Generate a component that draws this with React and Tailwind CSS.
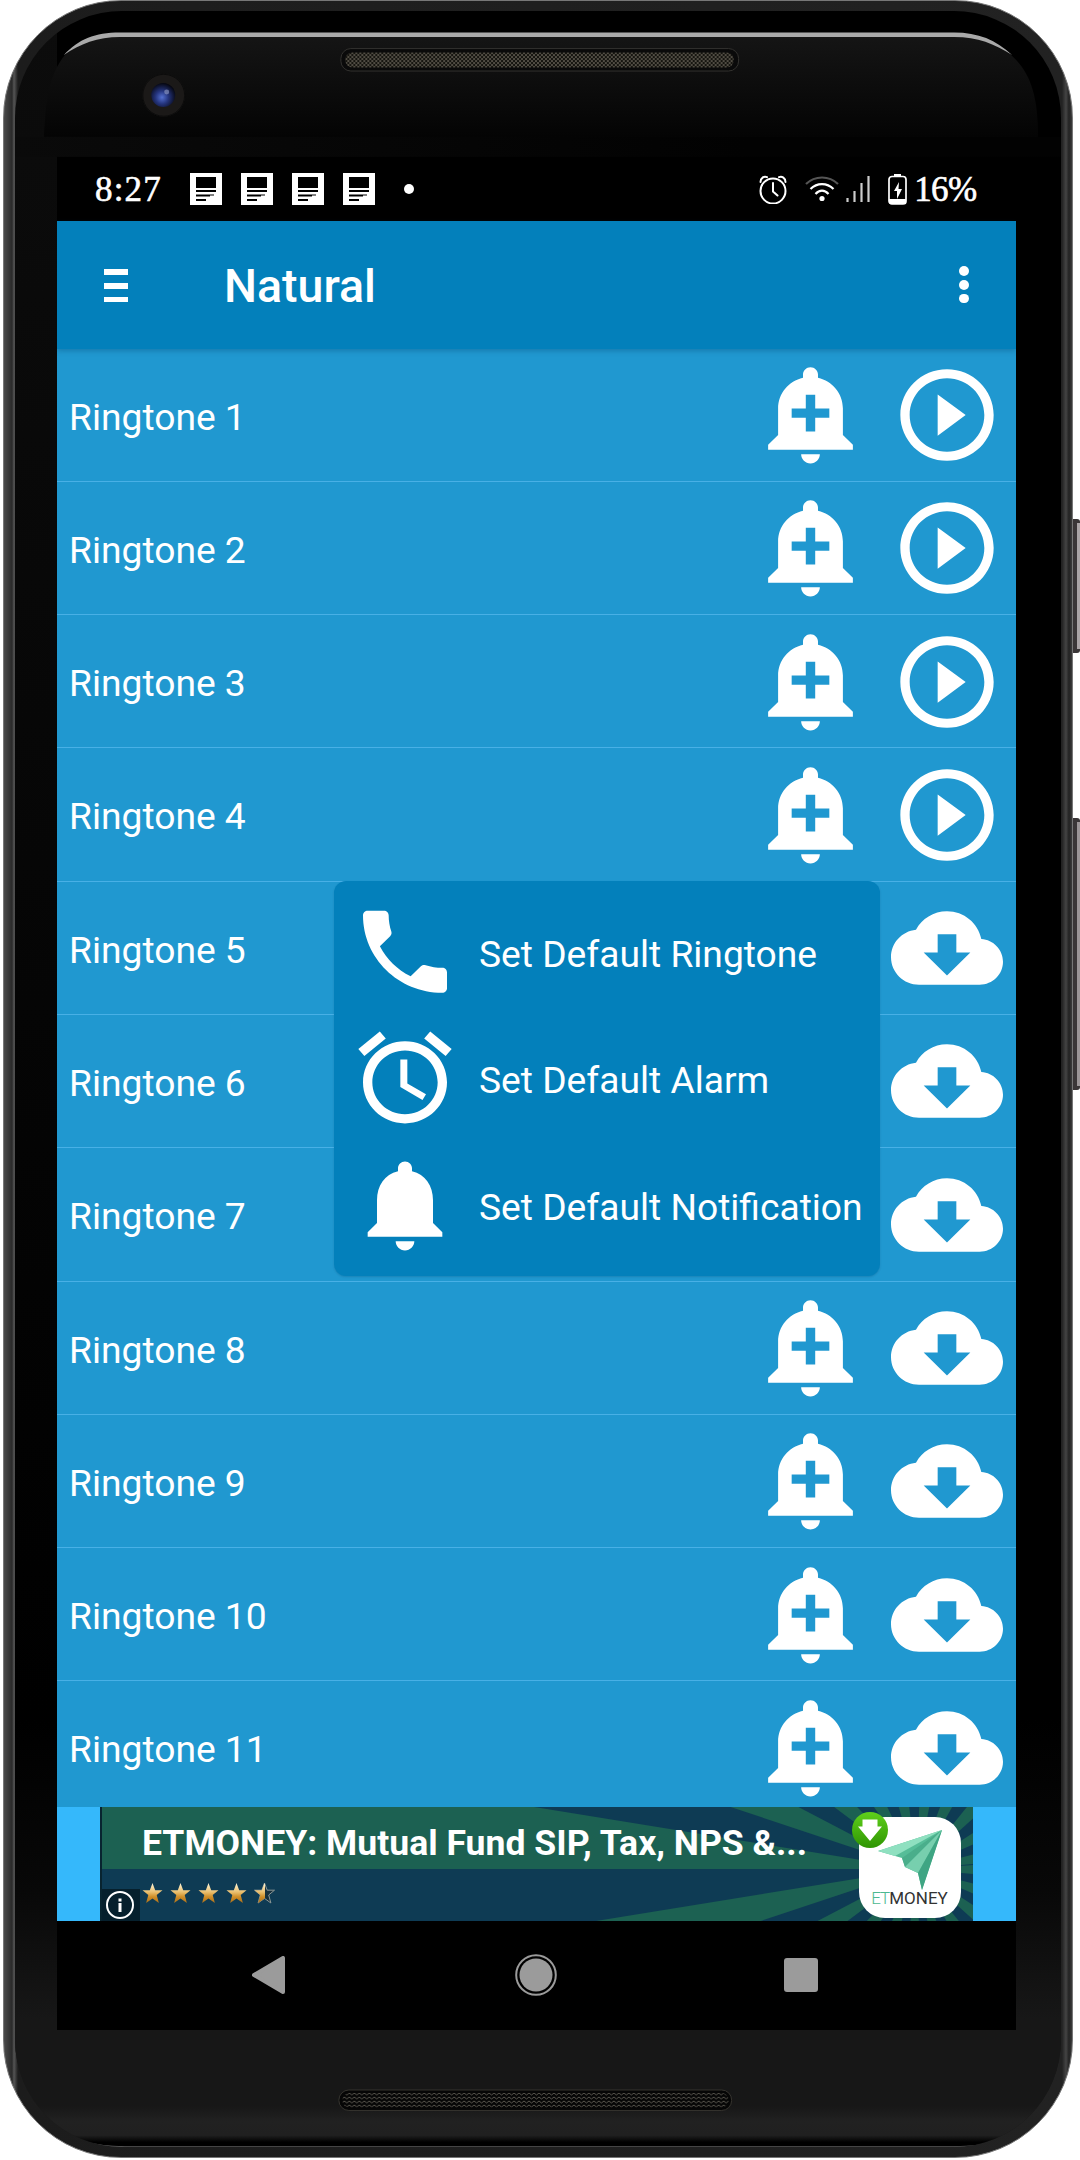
const RINGTONES = Array.from({ length: 11 }, (_, i) => ({
  id: i + 1,
  name: `Ringtone ${i + 1}`,
  downloaded: i < 4,
}));

const ICONS = {
  addAlert:
    'M10.01 21.01c0 1.1.89 1.99 1.99 1.99s1.99-.89 1.99-1.99h-3.98zm8.87-4.19V11c0-3.25-2.25-5.97-5.29-6.69v-.72C13.59 2.71 12.88 2 12 2s-1.59.71-1.59 1.59v.72C7.37 5.03 5.12 7.75 5.12 11v5.82L3 18.94V20h18v-1.06l-2.12-2.12zM16 13.01h-3v3h-2v-3H8V11h3V8h2v3h3v2.01z',
  play: 'M10 16.5l6-4.5-6-4.5v9zM12 2C6.48 2 2 6.48 2 12s4.48 10 10 10 10-4.48 10-10S17.52 2 12 2zm0 18c-4.41 0-8-3.59-8-8s3.59-8 8-8 8 3.59 8 8-3.59 8-8 8z',
  download:
    'M19.35 10.04C18.67 6.59 15.64 4 12 4 9.11 4 6.6 5.64 5.35 8.04 2.34 8.36 0 10.91 0 14c0 3.31 2.69 6 6 6h13c2.76 0 5-2.24 5-5 0-2.64-2.05-4.78-4.65-4.96zM17 13l-5 5-5-5h3V9h4v4h3z',
  phone:
    'M6.62 10.79c1.44 2.83 3.76 5.14 6.59 6.59l2.2-2.2c.27-.27.67-.36 1.02-.24 1.12.37 2.33.57 3.57.57.55 0 1 .45 1 1V20c0 .55-.45 1-1 1-9.39 0-17-7.61-17-17 0-.55.45-1 1-1h3.5c.55 0 1 .45 1 1 0 1.25.2 2.45.57 3.57.11.35.03.74-.25 1.02l-2.2 2.2z',
  alarm:
    'M22 5.72l-4.6-3.86-1.29 1.53 4.6 3.86L22 5.72zM7.88 3.39L6.6 1.86 2 5.71l1.29 1.53 4.59-3.85zM12.5 8H11v6l4.75 2.85.75-1.23-4-2.37V8zM12 4c-4.97 0-9 4.03-9 9s4.02 9 9 9c4.97 0 9-4.03 9-9s-4.03-9-9-9zm0 16c-3.87 0-7-3.13-7-7s3.13-7 7-7 7 3.13 7 7-3.13 7-7 7z',
  bell: 'M12 22c1.1 0 2-.9 2-2h-4c0 1.1.89 2 2 2zm6-6v-5c0-3.07-1.64-5.64-4.5-6.32V4c0-.83-.67-1.5-1.5-1.5s-1.5.67-1.5 1.5v.68C7.63 5.36 6 7.92 6 11v5l-2 2v1h16v-1l-2-2z',
};

const MENU = [
  { icon: 'phone', label: 'Set Default Ringtone' },
  { icon: 'alarm', label: 'Set Default Alarm' },
  { icon: 'bell', label: 'Set Default Notification' },
];

function Icon({ name, className }) {
  return (
    <svg viewBox="0 0 24 24" preserveAspectRatio="none" fill="currentColor" className={className}>
      <path d={ICONS[name]} />
    </svg>
  );
}

/* Phone hardware */

function TopBezel() {
  return (
    <svg viewBox="15 11 1048 146" className="block h-[146px] w-full shrink-0">
      <defs>
        <linearGradient id="glass" x1="0" y1="0" x2="0" y2="1">
          <stop offset="0" stopColor="#151515" />
          <stop offset="1" stopColor="#040404" />
        </linearGradient>
        <linearGradient id="lowerGlass">
          <stop offset="0" stopColor="#0a0a0a" />
          <stop offset="0.700" stopColor="#020202" />
        </linearGradient>
        <pattern id="mesh" width="4" height="4" patternUnits="userSpaceOnUse">
          <rect width="4" height="4" fill="#15140f" />
          <circle cx="1" cy="1" r="0.95" fill="#6a655a" />
          <circle cx="3" cy="3" r="0.95" fill="#6a655a" />
        </pattern>
        <radialGradient id="lens" cx="0.45" cy="0.6" r="0.6">
          <stop offset="0" stopColor="#5470d0" />
          <stop offset="0.45" stopColor="#25357e" />
          <stop offset="1" stopColor="#05060f" />
        </radialGradient>
      </defs>
      <path d="M44 137C46 95 50 74 65 55 78 42 92 35 118 35H955C982 35 998 42 1013 55 1032 72 1040 95 1040 137Z" fill="url(#glass)" />
      <rect x="15" y="137" width="1048" height="20" fill="url(#lowerGlass)" />
      <path d="M64 55C79 39 95 32.500 120 32.500H956C980 32.500 998 40 1014 55 996 44 980 37 956 37H120C98 37 80 44 64 55Z" fill="#a9a9a9" />
      <circle cx="164" cy="95.300" r="21.500" fill="#1b1918" />
      <circle cx="164" cy="95.300" r="21" fill="none" stroke="#0c0c0c" />
      <circle cx="163.500" cy="95" r="12" fill="url(#lens)" />
      <circle cx="167" cy="92" r="2.500" fill="#8490bd" opacity="0.700" />
      <rect x="341.500" y="48.500" width="398.500" height="22.500" rx="10" fill="#0a0a0a" stroke="#33322f" />
      <rect x="346" y="52.500" width="389" height="15" rx="7" fill="url(#mesh)" />
    </svg>
  );
}

function BottomBezel() {
  return (
    <svg viewBox="15 2030 1048 117" className="block h-[117px] w-full shrink-0">
      <defs>
        <linearGradient id="chin" x1="0" y1="0" x2="0" y2="1">
          <stop offset="0" stopColor="#171717" />
          <stop offset="0.650" stopColor="#171717" />
          <stop offset="0.780" stopColor="#212121" />
          <stop offset="0.900" stopColor="#202020" />
          <stop offset="0.960" stopColor="#000" />
        </linearGradient>
        <pattern id="meshLow" width="5" height="4" patternUnits="userSpaceOnUse">
          <path d="M0 1L2.500 3L5 1" fill="none" stroke="#5a574f" strokeWidth="1" />
        </pattern>
      </defs>
      <rect x="15" y="2030" width="1048" height="117" fill="url(#chin)" />
      <path d="M42 2119C66 2139 92 2147 125 2147H956C992 2147 1010 2139 1034 2119" fill="none" stroke="#5c5c5c" strokeWidth="1.200" />
      <rect x="339.500" y="2090" width="393.500" height="20.500" rx="10" fill="#060606" stroke="#36342f" />
      <rect x="343" y="2093" width="387" height="14.500" rx="7" fill="url(#meshLow)" />
    </svg>
  );
}

/* Status bar */

function NewsIcon() {
  return (
    <svg viewBox="0 0 32 32" className="h-8 w-8">
      <rect width="32" height="32" fill="#fff" />
      <path d="M6 4h20v11H6zM6 17h20v2H6zM6 21.500h14v2H6zM6 26h10v2H6zM20 21.500h4v1h-4z" fill="#000" />
    </svg>
  );
}

function StatusBar() {
  return (
    <div className="flex h-[64px] shrink-0 items-center bg-black pl-[38px] pr-[39px] font-['Liberation_Serif',serif] text-[35px] leading-none text-white [-webkit-text-stroke:0.6px_#fff]">
      <span className="w-[94.500px] tracking-[1.200px]">8:27</span>
      <div className="flex gap-[19.200px]">
        {[0, 1, 2, 3].map((n) => (
          <NewsIcon key={n} />
        ))}
      </div>
      <span className="ml-[29px] h-[10px] w-[10px] rounded-full bg-white" />
      <svg viewBox="0 0 28 29" className="ml-auto h-[29px] w-[28px]" fill="none" stroke="#fff" strokeWidth="2">
        <circle cx="14" cy="16" r="12.500" />
        <path d="M14 8v8.500l4.500 4M1.500 7C1.500 3 5 .8 8 2.200M26.500 7C26.500 3 23 .8 20 2.200" strokeLinecap="round" />
      </svg>
      <svg viewBox="0 0 34 28" className="ml-[18px] h-[28px] w-[34px]" fill="none" stroke="#fff" strokeWidth="2.200">
        <path d="M1 9C10 .3 24 .3 33 9" stroke="#555" />
        <path d="M5.500 14C12 7.500 22 7.500 28.500 14M10.500 19C14.500 14.500 19.500 14.500 23.500 19" />
        <circle cx="17" cy="23.500" r="2.600" fill="#fff" stroke="none" />
      </svg>
      <svg viewBox="0 0 24 28" className="ml-[7px] h-[28px] w-[24px]" stroke="#ccc" strokeWidth="2.200">
        <path d="M1.500 23v4M8.500 16v11M15.500 8v19M22.500 1v26" />
      </svg>
      <svg viewBox="0 0 19 31" className="ml-[18px] h-[31px] w-[19px]">
        <path d="M6 0h7v3H6z" fill="#fff" />
        <rect x="1" y="2.500" width="17" height="27.500" rx="3" fill="none" stroke="#fff" strokeWidth="1.700" />
        <path d="M1 25h17v3q0 2-3 2H4q-3 0-3-2z" fill="#fff" />
        <path d="M11 8L6 17h3v8l5-10h-3.500z" fill="#fff" />
      </svg>
      <span className="ml-[7px] tracking-[-0.600px]">16%</span>
    </div>
  );
}

function AppBar() {
  return (
    <header className="z-10 flex h-[127.500px] shrink-0 items-center bg-[#0380bb] pl-[46.500px] pr-[47px] pt-[2px] shadow-[0_2px_5px_rgba(0,60,100,0.300)]">
      <div className="flex w-[24px] flex-col gap-[8px]">
        <span className="h-[5.600px] bg-white" />
        <span className="h-[5.600px] bg-white" />
        <span className="h-[5.600px] bg-white" />
      </div>
      <h1 className="ml-[96.500px] text-[46.500px] font-medium leading-none text-white">Natural</h1>
      <div className="-mt-[2px] ml-auto flex flex-col gap-[4.200px]">
        <span className="h-[9.500px] w-[9.500px] rounded-full bg-white" />
        <span className="h-[9.500px] w-[9.500px] rounded-full bg-white" />
        <span className="h-[9.500px] w-[9.500px] rounded-full bg-white" />
      </div>
    </header>
  );
}

function RingtoneRow({ tone }) {
  return (
    <li className="flex h-[133.300px] shrink-0 items-start border-b border-[#48b0e6] pl-[12px] pr-[13px] pt-[10.500px] text-white">
      <span className="mt-[36.500px] flex-1 text-[37.200px] leading-[42px]">{tone.name}</span>
      <Icon name="addAlert" className="-mt-px h-[110px] w-[113px]" />
      <Icon name={tone.downloaded ? 'play' : 'download'} className="ml-[23.500px] mt-px h-[110px] w-[112px]" />
    </li>
  );
}

function DefaultMenu() {
  return (
    <div className="absolute left-[276.500px] top-[533px] flex h-[395px] w-[546px] flex-col rounded-[12px] bg-[#0380bb] pl-[15px] pt-[15.500px] text-white shadow-[0_1px_2px_rgba(0,50,90,0.200)]">
      {MENU.map((item) => (
        <div key={item.icon} className="flex h-[127.300px] items-start">
          <Icon name={item.icon} className="h-[109.500px] w-[112px] shrink-0" />
          <span className="ml-[18.500px] mt-[36px] whitespace-nowrap text-[37.200px] leading-[42px]">{item.label}</span>
        </div>
      ))}
    </div>
  );
}

/* Ad banner */

function rayPoints(n) {
  const at = (deg) => {
    const a = (deg * Math.PI) / 180;
    return `${(815 - 1200 * Math.cos(a)).toFixed(1)},${(62 - 1200 * Math.sin(a)).toFixed(1)}`;
  };
  return `815,62 ${at(n * 18.4)} ${at(n * 18.4 + 9.2)}`;
}

function Star({ half }) {
  const d = 'M10.500 0l2.700 7.200h7.300l-5.800 4.800 2.200 8-6.400-4.600L4.100 20l2.200-8L.5 7.200h7.300z';
  return (
    <svg viewBox="0 0 21 21" className="h-[21px] w-[21px]">
      <defs>
        <linearGradient id="gold" x1="0" y1="0" x2="0" y2="1">
          <stop offset="0" stopColor="#fff6da" />
          <stop offset="0.450" stopColor="#eac070" />
          <stop offset="0.700" stopColor="#cf8d26" />
          <stop offset="1" stopColor="#a9701d" />
        </linearGradient>
        <clipPath id="leftHalf">
          <rect width="11" height="21" />
        </clipPath>
      </defs>
      {half && <path d={d} fill="#16303d" stroke="#8b9795" strokeWidth="1" />}
      <path d={d} fill="url(#gold)" clipPath={half ? 'url(#leftHalf)' : undefined} />
    </svg>
  );
}

function EtMoneyLogo() {
  return (
    <div className="relative mt-[10px] flex h-[101px] w-[102px] flex-col items-center rounded-[26px] bg-white">
      <svg viewBox="0 0 102 76" className="h-[76px] w-[102px]">
        <path d="M19 34L83 13 63 73 59 56 46 50 43 41z" fill="#56bd98" />
        <path d="M19 34L83 13 36 39z" fill="#8fe0c0" />
        <path d="M43 41L83 13 46 50z" fill="#4aae8b" />
        <path d="M46 50L83 13 59 56z" fill="#77cfae" />
        <path d="M59 56L83 13 63 73z" fill="#3fa583" />
      </svg>
      <span className="-mt-[3px] text-[17px] leading-[17px] text-[#333]">
        <span className="font-light tracking-[-1px] text-[#4cb890]">ET</span>MONEY
      </span>
      <svg viewBox="0 0 36 36" className="absolute left-[-7px] top-[-5px] h-[36px] w-[36px]">
        <defs>
          <linearGradient id="badge" x1="0" y1="0" x2="0" y2="1">
            <stop offset="0" stopColor="#5fd01b" />
            <stop offset="1" stopColor="#2f9503" />
          </linearGradient>
        </defs>
        <circle cx="18" cy="18" r="18" fill="url(#badge)" />
        <path d="M10.500 7.500h15v7H30L18 29 6 14.500h4.500z" fill="#fff" />
      </svg>
    </div>
  );
}

function AdBanner() {
  return (
    <div className="z-10 flex h-[113.500px] shrink-0 justify-center bg-[#35b8fb]">
      <div className="relative flex w-[873.500px] items-start overflow-hidden border-l-2 border-[#082430] bg-[#0e3b54]">
        <svg viewBox="0 0 872 114" className="absolute inset-0 h-[114px] w-[872px]">
          {Array.from({ length: 20 }, (_, n) => (
            <polygon key={n} points={rayPoints(n - 10)} fill="#1c6152" />
          ))}
        </svg>
        <div className="relative flex-1 pl-[40.500px] pt-[15px]">
          <p className="whitespace-nowrap text-[35.600px] font-bold leading-[42px] text-white">
            ETMONEY: Mutual Fund SIP, Tax, NPS &amp;...
          </p>
          <div className="mt-[19px] flex gap-[7px]">
            {[1, 2, 3, 4].map((n) => (
              <Star key={n} />
            ))}
            <Star half />
          </div>
        </div>
        <div className="mr-[12.500px]">
          <EtMoneyLogo />
        </div>
        <div className="absolute bottom-0 left-[-2px] flex h-[32px] w-[40px] items-center justify-center bg-[#06202d]">
          <svg viewBox="0 0 28 28" className="h-[28px] w-[28px]" fill="none" stroke="#fff" strokeWidth="2">
            <circle cx="14" cy="14" r="13" />
            <path d="M14 12v9M14 7.500v3" strokeWidth="3" />
          </svg>
        </div>
      </div>
    </div>
  );
}

function NavBar() {
  return (
    <nav className="flex h-[109px] shrink-0 items-center bg-black pl-[195px] text-[#9b9b9b]">
      <svg viewBox="0 0 33 38" className="h-[38px] w-[33px]" fill="currentColor" stroke="currentColor" strokeWidth="4" strokeLinejoin="round">
        <path d="M2 19L31 2v34z" />
      </svg>
      <svg viewBox="0 0 42 42" className="ml-[230px] h-[42px] w-[42px]">
        <circle cx="21" cy="21" r="19.800" fill="none" stroke="currentColor" strokeWidth="2" />
        <circle cx="21" cy="21" r="16.500" fill="currentColor" />
      </svg>
      <span className="ml-[226.500px] h-[34px] w-[34.500px] rounded-[3px] bg-[#9b9b9b]" />
    </nav>
  );
}

export default function App() {
  return (
    <div className="flex h-[2160px] w-[1080px] overflow-hidden bg-white pl-[3px] font-[Roboto,sans-serif]">
      <div className="h-[2158px] w-[1070px] shrink-0 rounded-[118px] border border-[#777] bg-[linear-gradient(90deg,#4a4a4a,#2a2a2a_8px,#555_10px,#1c1c1c_14px,#222_1058px,#444_1062px,#222_1065px,#3c3c3c)] px-[11px] pb-[10px] pt-[10px]">
        <div className="flex h-full flex-col overflow-hidden rounded-[107px] bg-[linear-gradient(#0c0c0c,#000),linear-gradient(#000,#000_80%,#080808_88%,#171717_94%)] bg-[length:42px_1700px,100%_100%] bg-no-repeat">
          <TopBezel />
          <div className="relative ml-[42px] flex h-[1873px] w-[958.500px] shrink-0 flex-col overflow-hidden bg-[#2098d0]">
            <StatusBar />
            <AppBar />
            <ul className="flex h-[1458.500px] shrink-0 flex-col overflow-hidden">
              {RINGTONES.map((tone) => (
                <RingtoneRow key={tone.id} tone={tone} />
              ))}
            </ul>
            <AdBanner />
            <NavBar />
            {/* popup anchored to the bell of the fourth row */}
            <div className="absolute left-0 top-[191px]">
              <DefaultMenu />
            </div>
          </div>
          <BottomBezel />
        </div>
      </div>
      {/* power and volume keys */}
      <div className="flex w-[7px] flex-col pt-[519px]">
        <span className="h-[134px] rounded-r-[3px] border-y-4 border-l-4 border-[#3a3637] bg-[#aaa4a6]" />
        <span className="mt-[165px] h-[272px] rounded-r-[3px] border-y-4 border-l-4 border-[#3a3637] bg-[#9b9597]" />
      </div>
    </div>
  );
}
